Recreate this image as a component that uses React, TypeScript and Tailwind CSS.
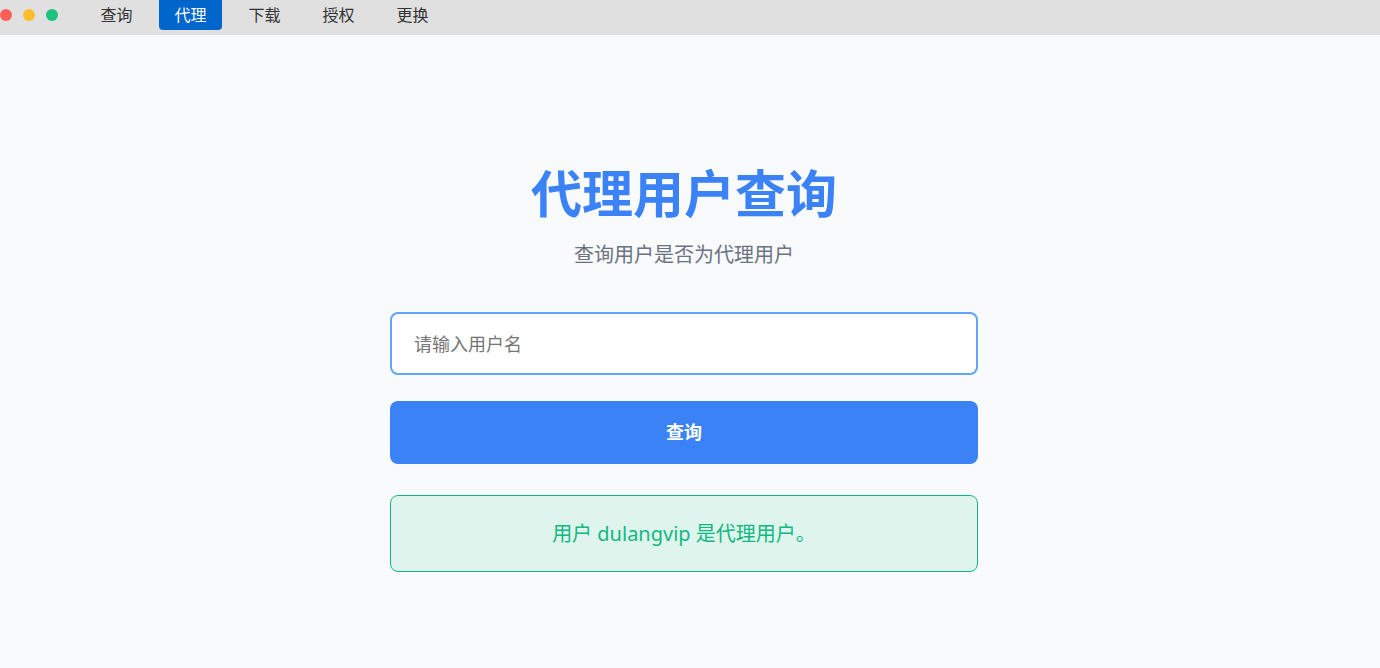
import React from "react";

export default function App() {
  const tabs = ["查询", "代理", "下载", "授权", "更换"];
  return (
    <div className="w-[1380px] h-[668px] flex flex-col bg-[#f9fafb]" style={{ fontFamily: '"Noto Sans", "Noto Sans CJK SC", sans-serif' }}>
      <div className="h-[35px] shrink-0 bg-[#e0e0e0] flex items-start">
        <div className="flex items-center gap-[11px] h-[30px]">
          <span className="w-[12px] h-[12px] rounded-full bg-[#ff5f57]" />
          <span className="w-[12px] h-[12px] rounded-full bg-[#febc2e]" />
          <span className="w-[12px] h-[12px] rounded-full bg-[#19c37d]" />
        </div>
        <div className="flex ml-[27px] gap-[11px]">
          {tabs.map((t, i) => (
            <div
              key={t}
              className={
                "h-[30px] w-[63px] flex items-center justify-center text-[16px] rounded-b-[4px] " +
                (i === 1 ? "bg-[#0066cc] text-white" : "text-[#333333]")
              }
            >
              {t}
            </div>
          ))}
        </div>
      </div>
      <div className="flex-1 flex flex-col items-center pt-[126px] pr-[12px]">
        <h1 className="text-[51px] leading-[64px] font-bold text-[#3b82f6]">代理用户查询</h1>
        <p className="mt-[16px] text-[20px] leading-[28px] text-[#6b7280]">查询用户是否为代理用户</p>
        <div className="mt-[43px] w-[588px] flex flex-col">
          <input
            className="h-[63px] w-full rounded-[8px] border-2 border-[#60a5fa] bg-white px-[22px] text-[18px] outline-none placeholder:text-[#757575]"
            placeholder="请输入用户名"
          />
          <button className="mt-[26px] h-[63px] w-full rounded-[8px] bg-[#3b82f6] text-white text-[18px] font-bold">
            查询
          </button>
          <div className="mt-[31px] h-[77px] w-full rounded-[8px] border border-[#10b981] bg-[#e0f4ee] flex items-center justify-center text-[20px] text-[#10b981]">
            用户 dulangvip 是代理用户。
          </div>
        </div>
      </div>
    </div>
  );
}
